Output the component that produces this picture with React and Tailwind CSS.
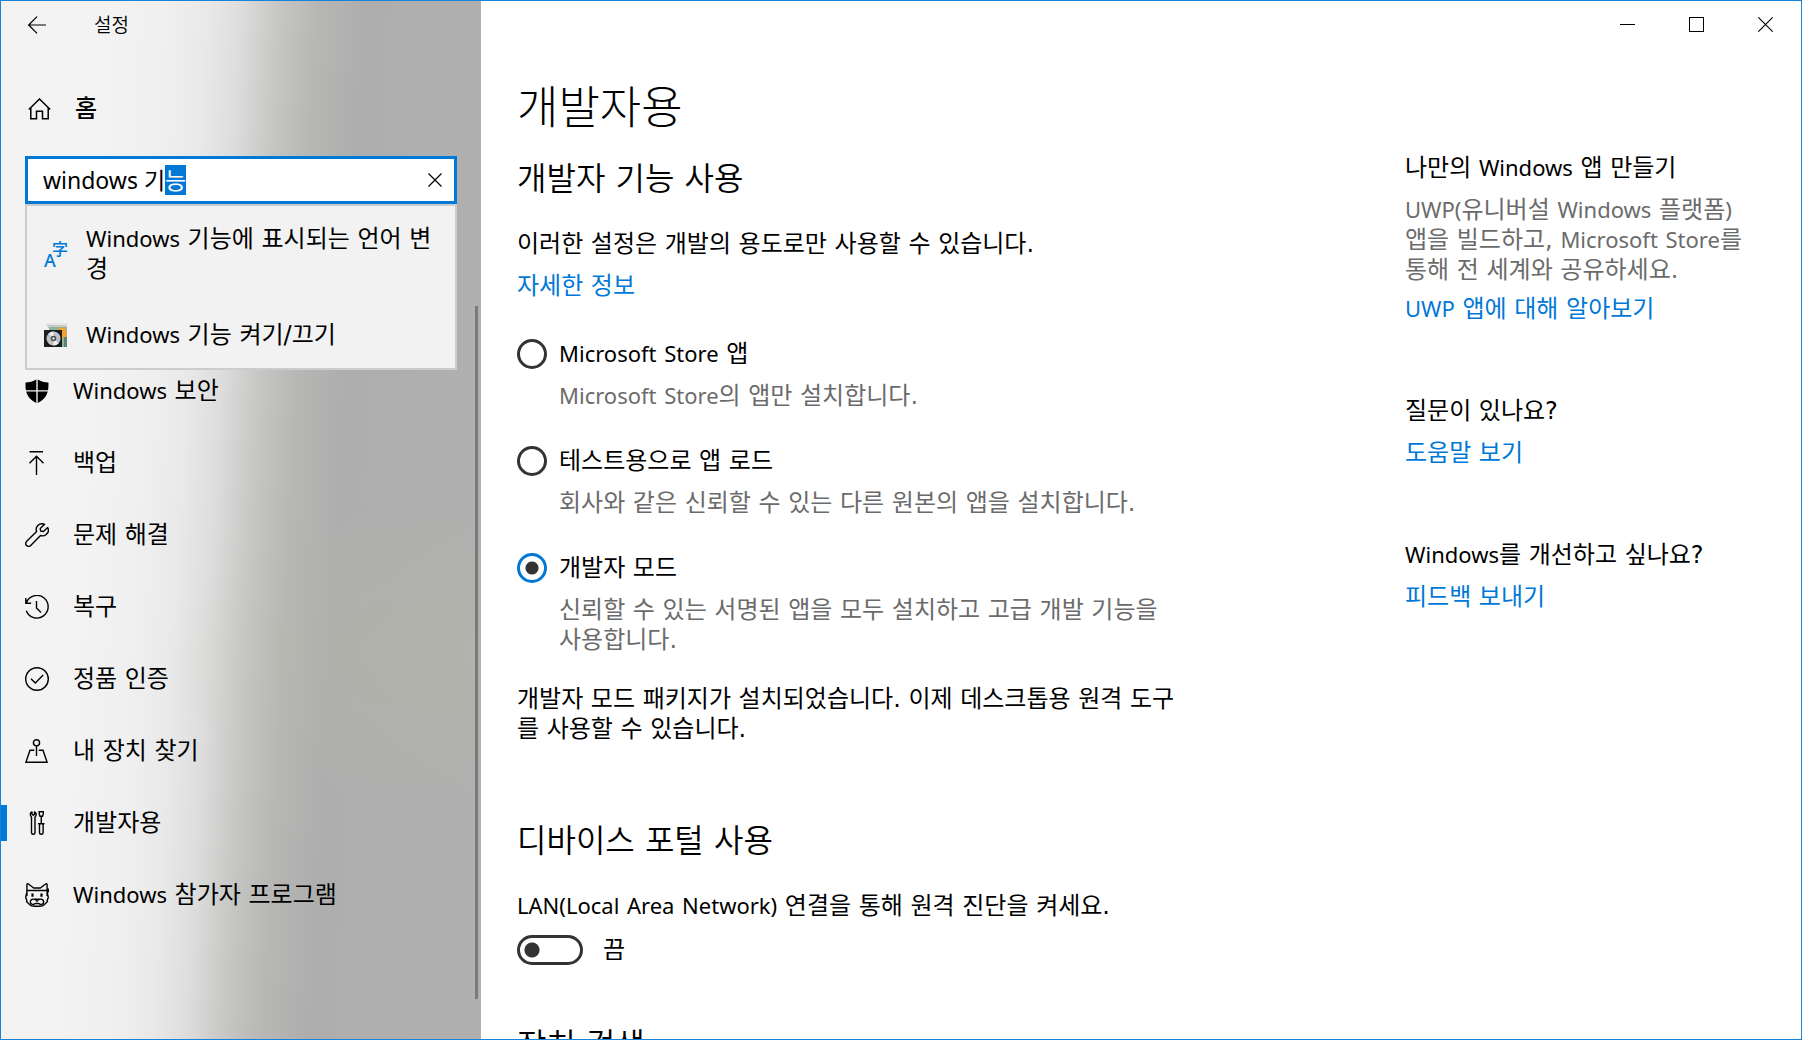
import { useEffect, useRef } from 'react';

const navItems = [
  { id: 'security', label: 'Windows 보안', icon: ShieldIcon },
  { id: 'backup', label: '백업', icon: BackupIcon },
  { id: 'troubleshoot', label: '문제 해결', icon: WrenchIcon },
  { id: 'recovery', label: '복구', icon: RecoveryIcon },
  { id: 'activation', label: '정품 인증', icon: ActivationIcon },
  { id: 'find', label: '내 장치 찾기', icon: FindDeviceIcon },
  { id: 'developers', label: '개발자용', icon: ToolsIcon, active: true },
  { id: 'insider', label: 'Windows 참가자 프로그램', icon: InsiderIcon },
];

const suggestions = [
  { id: 'language', label: 'Windows 기능에 표시되는 언어 변경', icon: LanguageIcon },
  { id: 'features', label: 'Windows 기능 켜기/끄기', icon: FeaturesIcon },
];

const modes = [
  { id: 'store', label: 'Microsoft Store 앱', desc: 'Microsoft Store의 앱만 설치합니다.' },
  { id: 'sideload', label: '테스트용으로 앱 로드', desc: '회사와 같은 신뢰할 수 있는 다른 원본의 앱을 설치합니다.' },
  {
    id: 'developer',
    label: '개발자 모드',
    desc: '신뢰할 수 있는 서명된 앱을 모두 설치하고 고급 개발 기능을 사용합니다.',
  },
];

// Latin words are set a little smaller than the Hangul around them
function Mixed({ text }) {
  return text.split(/([A-Za-z()]+)/).map((part, i) =>
    i % 2 === 1 ? (
      <span key={i} className="font-['Noto_Sans',sans-serif] text-[22px] leading-6">{part}</span>
    ) : (
      part
    )
  );
}

function Icon({ children, size = 24 }) {
  return (
    <svg
      width={size}
      height={size}
      viewBox="0 0 24 24"
      fill="none"
      stroke="currentColor"
      strokeWidth="1.4"
      className="shrink-0"
      aria-hidden="true"
    >
      {children}
    </svg>
  );
}

function ShieldIcon() {
  return (
    <Icon>
      <path
        d="M0.5 3.5C4.5 3.5 8 2.500 11.300 0.500V11.200H0.900C0.500 9 0.500 6 0.500 3.500ZM12.700 0.500C16 2.500 19.500 3.500 23.500 3.500C23.500 6 23.500 9 23 11.200H12.700ZM1.200 12.500H11.300V24C6.500 21.500 2.500 18 1.200 12.500ZM12.700 12.500H22.700C21.400 18 17.500 21.500 12.700 24Z"
        fill="currentColor"
        stroke="none"
      />
    </Icon>
  );
}

function BackupIcon() {
  return (
    <Icon>
      <path d="M4.500 0.800H18M11.500 24V5.500M4.500 12.200L11.500 5.200L18.500 12.200" />
    </Icon>
  );
}

function WrenchIcon() {
  return (
    <Icon>
      <path
        strokeLinejoin="round"
        d="M19.600 1.300C16.500 -0.100 12.600 1 11.500 4.500C11.100 5.800 11.200 7.300 11.600 8.500L1.700 18.300C0.400 19.700 0.400 21.600 1.600 22.600C2.700 23.700 4.500 23.600 5.700 22.400L15.500 12.500C17.200 13.100 19.500 12.900 21.200 11.400C23.400 9.600 23.900 6.800 22.700 4.500L18.500 8.500L15.600 8L15.200 5.400Z"
      />
    </Icon>
  );
}

function RecoveryIcon() {
  return (
    <Icon>
      <path d="M1.400 7.500A11.300 11.300 0 1 1 1.300 15.700M0.800 3V8.300H6.100M1.200 8A11.300 11.300 0 0 1 3 4.800M11.500 6V13L16 17.400" />
    </Icon>
  );
}

function ActivationIcon() {
  return (
    <Icon>
      <circle cx="12" cy="12" r="11.300" />
      <path d="M6 11.700L10.300 16L18.200 8" />
    </Icon>
  );
}

function FindDeviceIcon() {
  return (
    <Icon>
      <circle cx="11.500" cy="3.800" r="3.100" />
      <path d="M11.500 7V17M9.300 11.200H5L0.900 23.300H22.100L18 11.200H13.700" />
    </Icon>
  );
}

function ToolsIcon() {
  return (
    <Icon>
      <path
        strokeLinejoin="round"
        d="M7 0.900C5 1.700 4.700 4.500 6.500 6V21.800C6.500 23.800 10 23.800 10 21.800V6C11.800 4.500 11.500 1.700 9.500 0.900V3.300L8.200 4.200L7 3.300Z"
      />
      <path d="M14.200 0.800H18.300V3L17.500 5.200H15L14.200 3ZM16.250 5.200V12.500M13 12.700H19.500M14.500 12.700V21.800C14.500 23.800 18.100 23.800 18.100 21.800V12.700" />
    </Icon>
  );
}

function InsiderIcon() {
  return (
    <Icon>
      <path
        strokeLinejoin="round"
        d="M1.900 13V1.500C2 0.600 3 0.600 3.700 1.200L8.600 5H15.400L20.300 1.200C21 0.600 22 0.600 22.100 1.500V13M1.900 7.500H23.800M23.500 5.500V9.500M1.900 9L0.700 14.500L1.900 17.500L1.500 18.500L4.500 21.500C6 23 8 23.300 9.500 23.300H14.500C16 23.300 18 23 19.500 21.500L22.500 18.500L22.100 17.500L23.300 14.500L22.100 9"
      />
      <path d="M12 18.500C10.500 15 5.500 15.500 5.300 19C5.300 21.500 9 22.500 10 20.300M12 18.500C13.500 15 18.500 15.500 18.700 19C18.700 21.500 15 22.500 14 20.300M9.500 16.200H14.500M10 20.500H14" />
      <path d="M7.500 10.500V13.800M16.500 10.500V13.800" strokeWidth="2.200" />
    </Icon>
  );
}

function LanguageIcon() {
  return (
    <span className="relative block size-6 shrink-0 text-[#0078d7]" aria-hidden="true">
      <span className="absolute top-2 left-0 font-['Noto_Sans',sans-serif] text-lg leading-5 font-medium">A</span>
      <span className="absolute -top-1 right-0 font-['Noto_Sans_CJK_KR',sans-serif] text-base leading-5 font-medium">字</span>
    </span>
  );
}

function FeaturesIcon() {
  return (
    <svg width="24" height="24" viewBox="0 0 24 24" className="shrink-0" aria-hidden="true">
      <path d="M2 0H24L22 5H4Z" fill="#c9c9c9" />
      <path d="M2 0H24L23.500 2H3Z" fill="#e6e6e6" />
      <rect x="5" y="4" width="18" height="20" fill="#8db59c" />
      <path d="M14 6C16 3.500 22 4 22.500 8V15H18Z" fill="#f5a22e" />
      <rect x="20" y="14" width="3" height="10" fill="#5b8571" />
      <rect y="7" width="18" height="17" fill="#1b1e21" />
      <circle cx="9.500" cy="15.500" r="7" fill="#bfc3c6" />
      <path d="M9.500 15.500L4.500 10.600A7 7 0 0 1 9.500 8.500ZM9.500 15.500L14.500 20.400A7 7 0 0 1 9.500 22.500Z" fill="#eef0f1" />
      <circle cx="9.500" cy="15.500" r="2.800" fill="#4a4f54" />
      <circle cx="9.500" cy="15.500" r="1.200" fill="#dfe2e4" />
    </svg>
  );
}

function SearchBox() {
  const inputRef = useRef(null);

  useEffect(() => {
    const input = inputRef.current;
    input.focus();
    input.setSelectionRange(input.value.length - 1, input.value.length);
  }, []);

  return (
    <div className="relative mr-6 ml-6">
      <div className="flex h-12 items-center border-3 border-[#0078d7] bg-white pl-[15px]">
        <input
          ref={inputRef}
          type="text"
          aria-label="설정 검색"
          defaultValue="windows 기능"
          className="min-w-0 flex-1 bg-transparent font-['Noto_Sans','Noto_Sans_CJK_KR',sans-serif] text-[23px] leading-[30px] outline-none selection:bg-[#0078d7] selection:text-white"
        />
        <button type="button" aria-label="지우기" className="flex w-[38px] items-center justify-center">
          <svg width="14" height="14" viewBox="0 0 14 14" stroke="currentColor" strokeWidth="1.200" aria-hidden="true">
            <path d="M0.500 0.500L13.500 13.500M13.500 0.500L0.500 13.500" />
          </svg>
        </button>
      </div>
      <ul className="absolute inset-x-0 top-full z-10 border-2 border-[#cccccc] bg-[#f2f2f2] py-[18px]">
        {suggestions.map(({ id, label, icon: SuggestionIcon }, i) => (
          <li key={id} className={i > 0 ? 'mt-9' : ''}>
            <button type="button" className="flex w-full items-center gap-[18px] pr-4 pl-[17px] text-left text-2xl leading-[30px]">
              <SuggestionIcon />
              <span>
                <Mixed text={label} />
              </span>
            </button>
          </li>
        ))}
      </ul>
    </div>
  );
}

function Sidebar() {
  return (
    <aside className="relative flex w-[480px] shrink-0 flex-col bg-[radial-gradient(ellipse_280px_150px_at_92%_63%,rgba(184,186,160,0.3),transparent),linear-gradient(93deg,#f3f3f3_110px,#efefef_170px,#e9e9e9_205px,#dcdddc_240px,#c5c6c3_280px,#b7b7b5_315px,#aeaeae_360px,#b0b0b0_100%)]">
      <div className="flex h-[47px] items-center pl-[27px]">
        <button type="button" aria-label="뒤로">
          <svg width="18" height="18" viewBox="0 0 18 18" fill="none" stroke="currentColor" strokeWidth="1.200" aria-hidden="true">
            <path d="M18 9H0.800M9 0.700L0.700 9L9 17.300" />
          </svg>
        </button>
        <span className="ml-12 text-[19px] leading-6 font-[350]">설정</span>
      </div>

      <a href="#home" className="mt-[43px] mb-[29px] flex h-9 items-center gap-[23px] pl-[27px] text-2xl">
        <svg width="24" height="22" viewBox="0 0 24 22" fill="none" stroke="currentColor" strokeWidth="1.500" aria-hidden="true">
          <path d="M0.800 11.500L11.500 1L22.200 11.500M2.800 10V20.700H8.500V13.200H14.500V20.700H20.200V10" />
        </svg>
        <span className="font-medium">홈</span>
      </a>

      <SearchBox />

      <nav className="mt-[151px]">
        {navItems.map(({ id, label, icon: NavIcon, active }) => (
          <a key={id} href={`#${id}`} className="relative flex h-[72px] items-center gap-6 pl-6 text-2xl" aria-current={active ? 'page' : undefined}>
            {active && <span className="absolute top-[18px] left-0 h-9 w-1.5 bg-[#0078d7]" />}
            <NavIcon />
            <span>
              <Mixed text={label} />
            </span>
          </a>
        ))}
      </nav>
      <div className="absolute top-[305px] right-[3px] bottom-10 w-[3px] bg-[#7a7a7a]" />
    </aside>
  );
}

function WindowControls() {
  return (
    <div className="flex h-[47px] justify-end pr-px">
      <button type="button" aria-label="최소화" className="flex w-[69px] items-center justify-center">
        <span className="h-px w-[15px] bg-black" />
      </button>
      <button type="button" aria-label="최대화" className="flex w-[69px] items-center justify-center">
        <span className="size-[15px] border border-black" />
      </button>
      <button type="button" aria-label="닫기" className="flex w-[69px] items-center justify-center">
        <svg width="15" height="15" viewBox="0 0 15 15" stroke="currentColor" strokeWidth="1.100" aria-hidden="true">
          <path d="M0.300 0.300L14.700 14.700M14.700 0.300L0.300 14.700" />
        </svg>
      </button>
    </div>
  );
}

function HelpLink({ href, text, className }) {
  return (
    <a href={href} className={`block text-[#0078d7] ${className}`}>
      <Mixed text={text} />
    </a>
  );
}

export default function App() {
  return (
    <div className="flex h-screen overflow-hidden border border-[#1883d7] bg-white font-['DejaVu_Sans','Noto_Sans_CJK_KR',sans-serif] text-black">
      <Sidebar />

      <div className="min-w-0 flex-1">
        <WindowControls />
        <div className="flex justify-between pr-9 pl-9 text-2xl leading-[30px]">
          <main className="max-w-[664px] min-w-0 flex-1">
            <h1 className="mt-[31px] text-[45px] leading-[60px] font-light">개발자용</h1>

            <h2 className="mt-5 text-[32px] leading-10 font-[350]">개발자 기능 사용</h2>
            <p className="mt-[30px]">이러한 설정은 개발의 용도로만 사용할 수 있습니다.</p>
            <HelpLink href="#more" text="자세한 정보" className="mt-3" />

            <div role="radiogroup" aria-label="개발자 기능 사용" className="mt-[38px] space-y-[35px]">
              {modes.map((mode) => (
                <div key={mode.id}>
                  <div className="flex items-center gap-3">
                    <input
                      type="radio"
                      id={mode.id}
                      name="mode"
                      defaultChecked={mode.id === 'developer'}
                      className="size-[30px] shrink-0 appearance-none rounded-full border-3 border-[#333333] checked:border-[#0078d7] checked:bg-[radial-gradient(circle,#333333_6px,transparent_7px)]"
                    />
                    <label htmlFor={mode.id}>
                      <Mixed text={mode.label} />
                    </label>
                  </div>
                  <p className="mt-3 pl-[42px] text-[#6b6b6b]">
                    <Mixed text={mode.desc} />
                  </p>
                </div>
              ))}
            </div>

            <p className="mt-[29px]">
              개발자 모드 패키지가 설치되었습니다. 이제 데스크톱용 원격 도구를 사용할 수 있습니다.
            </p>

            <h2 className="mt-[77px] text-[32px] leading-10 font-[350]">디바이스 포털 사용</h2>
            <p className="mt-[30px]">
              <Mixed text="LAN(Local Area Network) 연결을 통해 원격 진단을 켜세요." />
            </p>
            <div className="mt-3.5 flex items-center gap-5">
              <input
                type="checkbox"
                role="switch"
                id="portal"
                className="h-[30px] w-[66px] appearance-none rounded-full border-3 border-[#333333] bg-[radial-gradient(circle_at_12px_12px,#333333_7px,transparent_8px)]"
              />
              <label htmlFor="portal">끔</label>
            </div>

            <h2 className="mt-[60px] text-[32px] leading-10 font-[350]">장치 검색</h2>
          </main>

          <aside className="w-[360px] shrink-0 pt-[105px]">
            <h3>
              <Mixed text="나만의 Windows 앱 만들기" />
            </h3>
            <p className="mt-3 max-w-[346px] text-[#6b6b6b]">
              <Mixed text="UWP(유니버설 Windows 플랫폼) 앱을 빌드하고, Microsoft Store를 통해 전 세계와 공유하세요." />
            </p>
            <HelpLink href="#uwp" text="UWP 앱에 대해 알아보기" className="mt-[9px]" />

            <h3 className="mt-[72px]">질문이 있나요?</h3>
            <HelpLink href="#help" text="도움말 보기" className="mt-3" />

            <h3 className="mt-[72px]">
              <Mixed text="Windows를 개선하고 싶나요?" />
            </h3>
            <HelpLink href="#feedback" text="피드백 보내기" className="mt-3" />
          </aside>
        </div>
      </div>
    </div>
  );
}
